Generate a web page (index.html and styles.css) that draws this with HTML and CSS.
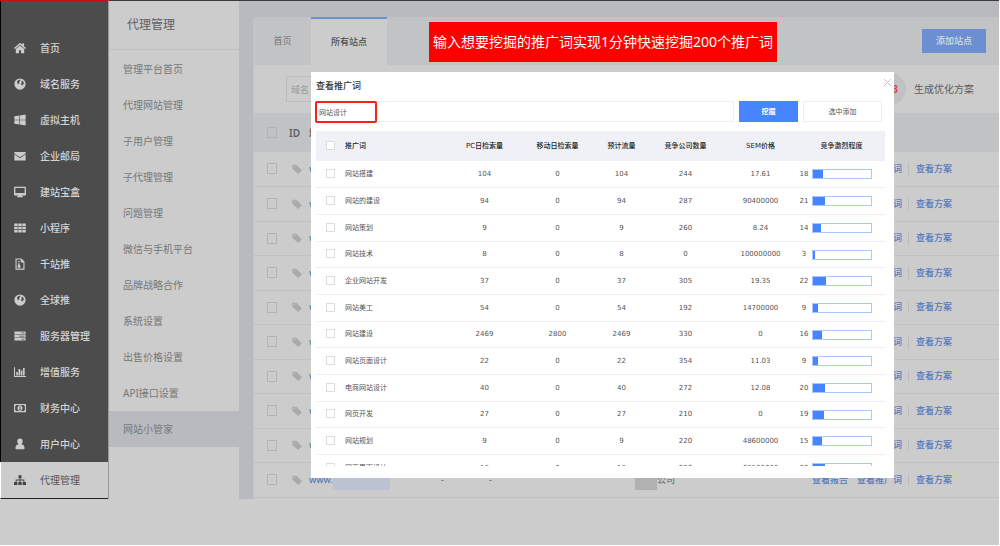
FILE: index.html
```html
<!DOCTYPE html>
<html lang="zh-CN">
<head>
<meta charset="utf-8">
<title>代理管理</title>
<link rel="stylesheet" href="styles.css">
</head>
<body>
<svg class="sprite" aria-hidden="true">
  <symbol id="i-home" viewBox="0 0 16 16"><path d="M8 1 0 8l1.200 1.400L8 3.600l6.800 5.800L16 8l-2.600-2.300V1.800h-2.200v2z"/><path d="M8 4.600 2.400 9.400V15h4.200v-4h2.800v4h4.200V9.400z"/></symbol>
  <symbol id="i-globe" viewBox="0 0 16 16"><path fill-rule="evenodd" d="M8 .5a7.500 7.500 0 1 0 0 15 7.500 7.500 0 0 0 0-15zM6 2.500 8.500 2.300 8 4.300 6.500 5.300 7.500 7 6 8 4.500 7 4 4.500zM10.500 3.200 12.500 4.500 13 7.500 11 10 9.500 8.500 10 6z"/></symbol>
  <symbol id="i-win" viewBox="0 0 16 16"><path d="M.5 3 7.200 2.100V7.600H.5zM8 2 15.500.8v6.800H8zM.5 8.400h6.700v5.500L.5 13zM8 8.400h7.500v6.800L8 14z"/></symbol>
  <symbol id="i-mail" viewBox="0 0 16 16"><path d="M.5 2.500h15v2L8 9.800.5 4.500zM.5 5.700 8 11l7.500-5.300V14H.5z"/></symbol>
  <symbol id="i-desk" viewBox="0 0 16 16"><path fill-rule="evenodd" d="M1 1h14a1 1 0 0 1 1 1v9.500a1 1 0 0 1-1 1h-4.500l.5 1.300h1V15H4v-1.200h1l.5-1.300H1a1 1 0 0 1-1-1V2a1 1 0 0 1 1-1zM1.800 2.600v6.600h12.400V2.600z"/></symbol>
  <symbol id="i-grid" viewBox="0 0 16 16"><path d="M.3 2h4.600v3.400H.3zM5.700 2h4.600v3.400H5.700zM11.100 2h4.600v3.400h-4.600zM.3 6.300h4.600v3.400H.3zM5.700 6.300h4.600v3.400H5.700zM11.100 6.300h4.600v3.400h-4.600zM.3 10.600h4.600V14H.3zM5.700 10.600h4.600V14H5.700zM11.100 10.600h4.600V14h-4.600z"/></symbol>
  <symbol id="i-file" viewBox="0 0 16 16"><path fill-rule="evenodd" d="M2 .5h8L14 4.500v11H2zM3.500 2v12h9V6H9V2zM5.500 4h2v1.500h-2zM5.500 7h2v1.500l1.500 3.500-1 1H5.500l-1-1 1-3z"/></symbol>
  <symbol id="i-server" viewBox="0 0 16 16"><path fill-rule="evenodd" d="M.5 2h15v3.600H.5zM10 3.300v1h4v-1zM.5 6.200h15v3.600H.5zM7 7.500v1h7v-1zM.5 10.400h15V14H.5zM10 11.700v1h4v-1z"/></symbol>
  <symbol id="i-chart" viewBox="0 0 16 16"><path d="M0 1.500h1.400v11.800H16v1.400H0zM3 8h2.200v4.500H3zM6 4h2.200v8.500H6zM9 6h2.200v6.500H9zM12 2.500h2.200v10H12z"/></symbol>
  <symbol id="i-money" viewBox="0 0 16 16"><path fill-rule="evenodd" d="M0 2.500h16v11H0zM3 4 1.500 5.500v5L3 12h10l1.500-1.500v-5L13 4zM8 4.200c4.500 0 4.500 7.600 0 7.600s-4.500-7.600 0-7.600zM7 6v1h.5v2.500H7v1h2.200v-1h-.7V5.800z"/></symbol>
  <symbol id="i-user" viewBox="0 0 16 16"><path d="M8 .8c5 0 4 6.500 1.800 7.400C13 8.500 14 11 14 13.500c0 1-.6 1.500-1.500 1.500h-9C2.600 15 2 14.500 2 13.500 2 11 3 8.500 6.200 8.200 4 7.300 3 .8 8 .8z"/></symbol>
  <symbol id="i-tree" viewBox="0 0 16 16"><path d="M6 1.500h4v4H8.600v1.800h5.200v3.200H16v4h-4.500v-4h1.100V8.500h-4v2h1.600v4H5.800v-4h1.600v-2h-4v2h1.100v4H0v-4h2.200V7.300h5.200V5.500H6z"/></symbol>
  <symbol id="i-tag" viewBox="0 0 16 16"><path fill-rule="evenodd" d="M.5 1H7l9 9-6 6L.5 7.500zM3.500 2.800a1 1 0 1 0 0 2 1 1 0 0 0 0-2z"/></symbol>
</svg>
<div class="page">
  <div class="shell">
    <nav class="side">
      <ul class="side-list">
        <li><a href="#"><svg><use href="#i-home"/></svg>首页</a></li>
        <li><a href="#"><svg><use href="#i-globe"/></svg>域名服务</a></li>
        <li><a href="#"><svg><use href="#i-win"/></svg>虚拟主机</a></li>
        <li><a href="#"><svg><use href="#i-mail"/></svg>企业邮局</a></li>
        <li><a href="#"><svg><use href="#i-desk"/></svg>建站宝盒</a></li>
        <li><a href="#"><svg><use href="#i-grid"/></svg>小程序</a></li>
        <li><a href="#"><svg><use href="#i-file"/></svg>千站推</a></li>
        <li><a href="#"><svg><use href="#i-globe"/></svg>全球推</a></li>
        <li><a href="#"><svg><use href="#i-server"/></svg>服务器管理</a></li>
        <li><a href="#"><svg><use href="#i-chart"/></svg>增值服务</a></li>
        <li><a href="#"><svg><use href="#i-money"/></svg>财务中心</a></li>
        <li><a href="#"><svg><use href="#i-user"/></svg>用户中心</a></li>
        <li class="current"><a href="#"><svg><use href="#i-tree"/></svg>代理管理</a></li>
      </ul>
    </nav>
    <nav class="sub">
      <h2 class="sub-title">代理管理</h2>
      <ul class="sub-list">
        <li><a href="#">管理平台首页</a></li>
        <li><a href="#">代理网站管理</a></li>
        <li><a href="#">子用户管理</a></li>
        <li><a href="#">子代理管理</a></li>
        <li><a href="#">问题管理</a></li>
        <li><a href="#">微信与手机平台</a></li>
        <li><a href="#">品牌战略合作</a></li>
        <li><a href="#">系统设置</a></li>
        <li><a href="#">出售价格设置</a></li>
        <li><a href="#">API接口设置</a></li>
        <li class="current"><a href="#">网站小管家</a></li>
      </ul>
    </nav>
    <main class="main">
      <div class="panel">
        <div class="tabs">
          <button class="tab" type="button">首页</button>
          <button class="tab active" type="button">所有站点</button>
          <button class="add" type="button">添加站点</button>
        </div>
        <div class="filter">
          <input class="filter-input" type="text" placeholder="域名" aria-label="域名">
          <span class="step">3</span>
          <span class="step-text">生成优化方案</span>
        </div>
        <table class="sites">
          <thead>
            <tr><th class="c-check"><input type="checkbox" aria-label="全选站点"></th><th class="c-tag">ID</th><th class="c-name">域名</th><th class="c-a"></th><th class="c-b"></th><th></th><th class="c-ops"></th></tr>
          </thead>
          <tbody id="sites"></tbody>
        </table>
      </div>
    </main>
  </div>

  <p class="banner">输入想要挖掘的推广词实现1分钟快速挖掘200个推广词</p>

  <section class="modal" role="dialog" aria-label="查看推广词">
    <header class="modal-head">
      <h3>查看推广词</h3>
      <button class="close" type="button" aria-label="关闭"><svg viewBox="0 0 8 8"><path d="M0 0 8 8M8 0 0 8"/></svg></button>
    </header>
    <form class="search">
      <div class="search-field">
        <input class="search-input" type="text" value="网站设计" aria-label="推广词">
        <span class="mark"></span>
      </div>
      <button class="btn primary" type="button">挖掘</button>
      <button class="btn" type="button">选中添加</button>
    </form>
    <div class="scroll">
      <table class="words">
        <colgroup><col class="w-check"><col class="w-name"><col class="w-pc"><col class="w-mob"><col class="w-flow"><col class="w-comp"><col class="w-sem"><col class="w-rate"></colgroup>
        <thead>
          <tr><th><input type="checkbox" aria-label="全选"></th><th class="name">推广词</th><th>PC日检索量</th><th>移动日检索量</th><th>预计流量</th><th>竞争公司数量</th><th>SEM价格</th><th>竞争激烈程度</th></tr>
        </thead>
        <tbody id="words"></tbody>
      </table>
    </div>
  </section>
</div>
<script src="app.js"></script>
</body>
</html>
```
FILE: styles.css
```css
* { box-sizing: border-box; }
body {
  margin: 0;
  background: #fff;
  font-family: "Noto Sans", "Noto Sans CJK SC", sans-serif;
  font-size: 10px;
  line-height: 14px;
  color: #666;
}
ul { list-style: none; margin: 0; padding: 0; }
h2, h3, p { margin: 0; font-weight: 400; }
a { color: inherit; text-decoration: none; }
button, input { font: inherit; color: inherit; margin: 0; }
button { border: 0; padding: 0; cursor: pointer; }
table { border-collapse: collapse; table-layout: fixed; width: 100%; }
th, td { padding: 0; }
svg { fill: currentColor; }
.sprite { display: none; }

.page {
  position: relative;
  min-height: 100vh;
  background: #ccc;
  border: solid #fff;
  border-width: 0 1px 1px 0;
}
.shell { display: flex; border-top: 1px solid #3a3a3c; }

.side {
  flex: 0 0 109px;
  margin-top: -1px;
  border-top: 1px solid #d00d0d;
  border-right: 1px solid #999;
  background: #4c4c4c;
}
.side-list { padding-top: 29px; border-left: 1px solid #000; background: #4c4c4c; }
.side-list a {
  display: flex;
  align-items: center;
  gap: 14px;
  height: 36px;
  padding-left: 13px;
  color: #d4d4d4;
  font-weight: 500;
}
.side-list svg { flex: none; width: 12px; height: 12px; color: #ccc; }
.side-list .current {
  margin-left: -1px;
  border-left: 1px solid #fff;
  border-bottom: 1px solid #222;
  background: #ccc;
}
.side-list .current a { color: #555; font-weight: 400; }
.side-list .current svg { color: #444; }

.sub { flex: 0 0 130px; background: #ccc; }
.sub-title {
  height: 49px;
  padding: 17px 18px 0;
  border-bottom: 1px solid #c0c0c0;
  font-size: 12px;
  color: #606060;
}
.sub-list { padding-top: 1px; }
.sub-list a { display: flex; align-items: center; height: 36px; padding-left: 14px; color: #777; }
.sub-list .current { background: #b8babf; }

.main { flex: 1; min-width: 0; padding: 16px 0 0 14px; background: #b8babf; }
.panel { height: 100%; background: #ccc; border-left: 1px solid #c2c3c6; }
.tabs { display: flex; height: 48px; background: #c2c3c5; font-size: 9px; }
.tab { width: 57px; background: none; color: #707070; }
.tab.active {
  width: 76px;
  background: #ccc;
  border-top: 2px solid #6b8fd0;
  color: #4c4c4c;
  font-weight: 500;
}
.add {
  align-self: center;
  width: 64px;
  height: 24px;
  margin: 0 13px 0 auto;
  background: #6b8fd0;
  color: #ddd;
  font-weight: 500;
}
.filter { display: flex; align-items: center; height: 48px; padding: 0 25px 0 32px; }
.filter-input { width: 200px; height: 26px; padding: 0 4px; border: 1px solid #bbb; background: #ccc; font-size: 9px; }
.filter-input::placeholder { color: #999; }
.step {
  width: 32px;
  height: 32px;
  margin-left: auto;
  padding-right: 8px;
  border-radius: 50%;
  background: #c0c1c4;
  color: #d4484a;
  font-weight: 700;
  line-height: 32px;
  text-align: right;
}
.step-text { margin-left: 8px; color: #5c5c5c; }

.sites { font-size: 9px; line-height: 12px; text-align: left; }
.sites thead tr { height: 39px; background: #c1c2c4; }
.sites tbody tr { height: 34px; border-bottom: 1px solid #c1c1c1; }
.sites tbody tr:nth-child(even) { height: 35px; }
.sites th { font-size: 10px; font-weight: 600; color: #606060; }
.c-check { width: 35px; }
.c-tag { width: 20px; }
.c-name { width: 132px; }
.c-a { width: 48px; }
.c-b { width: 146px; }
.c-ops { width: 187px; }
.sites td:first-child, .sites th:first-child { padding-left: 13px; }
.sites td:nth-child(2) svg { display: block; width: 10px; height: 10px; margin-left: 3px; color: #aaa; }
.sites a { color: #5379bf; font-weight: 500; }
.site { display: flex; align-items: center; }
.shade { width: 57px; height: 20px; background: #bbc3d3; }
.company { display: flex; align-items: center; }
.company .shade { width: 22px; background: #b1b1b1; }
.ops { display: flex; gap: 9px; }
.ops a:last-child { margin-left: -3px; padding-left: 7px; border-left: 1px solid #bbb; }

input[type="checkbox"] {
  appearance: none;
  display: block;
  width: 10px;
  height: 11px;
  border: 1px solid #b4b4b4;
  background: transparent;
}

.banner {
  position: absolute;
  top: 22px;
  left: 429px;
  padding: 11px 4px;
  background: #f00;
  color: #fff;
  font-size: 14px;
  line-height: 18px;
  white-space: nowrap;
}

.modal {
  position: absolute;
  top: 72px;
  left: 311px;
  right: 105px;
  padding: 0 9px 12px 5px;
  background: #fff;
  font-family: "DejaVu Sans", "Noto Sans CJK SC", sans-serif;
  font-size: 7px;
  line-height: 10px;
  color: #555;
}
.modal-head { display: flex; justify-content: space-between; height: 29px; padding-top: 7px; }
.modal-head h3 { font-size: 9px; line-height: 14px; color: #333; font-weight: 500; }
.close { width: 7px; height: 7px; margin-right: -6px; background: none; }
.close svg { display: block; width: 7px; height: 7px; stroke: #bbb; stroke-width: 1; }
.search { display: flex; gap: 5px; padding-right: 3px; }
.search-field { position: relative; flex: 1; }
.search-input { display: block; width: 100%; height: 21px; padding: 0 2px; border: 1px solid #eee; }
.mark {
  position: absolute;
  top: 0;
  left: -1px;
  width: 62px;
  height: 22px;
  border: 2px solid #f5221b;
  border-radius: 2px;
  pointer-events: none;
}
.btn { width: 79px; height: 21px; border: 1px solid #eee; background: #fff; }
.btn.primary { width: 59px; border-color: #4685ff; background: #4685ff; color: #fff; font-weight: 700; }
.scroll { margin-top: 9px; max-height: 335px; overflow: hidden; }
.words { text-align: center; }
.words thead tr { height: 30px; background: #eff1f6; color: #222; }
.words th { font-weight: 500; }
.words tbody tr { height: 27px; border-bottom: 1px solid #eee; }
.words tbody tr:nth-child(3n + 1) { height: 26px; }
.words .name { text-align: left; }
.words input[type="checkbox"] { width: 9px; height: 9px; margin: 0 0 1px 10px; border-color: #ddd; background: #fff; }
.w-check { width: 29px; }
.w-name { width: 104px; }
.w-pc { width: 71px; }
.w-mob { width: 75px; }
.w-flow { width: 53px; }
.w-comp { width: 75px; }
.w-sem { width: 75px; }
.rate { display: flex; align-items: center; gap: 2px; }
.rate span { width: 12px; }
.bar { width: 60px; height: 10px; margin-top: 1px; border: 1px solid #a9c6ff; }
.bar i { display: block; height: 100%; background: #4685ff; }
```
FILE: app.js
```js
const words = [
  ["网站搭建", 104, 0, 104, 244, "17.61", 18],
  ["网站的建设", 94, 0, 94, 287, "90400000", 21],
  ["网站策划", 9, 0, 9, 260, "8.24", 14],
  ["网站技术", 8, 0, 8, 0, "100000000", 3],
  ["企业网站开发", 37, 0, 37, 305, "19.35", 22],
  ["网站美工", 54, 0, 54, 192, "14700000", 9],
  ["网站建设", 2469, 2800, 2469, 330, "0", 16],
  ["网站页面设计", 22, 0, 22, 354, "11.03", 9],
  ["电商网站设计", 40, 0, 40, 272, "12.08", 20],
  ["网页开发", 27, 0, 27, 210, "0", 19],
  ["网站规划", 9, 0, 9, 220, "48600000", 15],
  ["网页界面设计", 18, 0, 18, 296, "68100000", 20]
];
document.getElementById("words").innerHTML = words.map(([name, ...rest]) => {
  const rate = rest.pop();
  return `<tr><td><input type="checkbox" aria-label="${name}"></td><td class="name">${name}</td>` +
    rest.map(v => `<td>${v}</td>`).join("") +
    `<td><div class="rate"><span>${rate}</span><div class="bar"><i style="width:${rate}%"></i></div></div></td></tr>`;
}).join("");

let rows = "";
for (let n = 1; n <= 10; n++) {
  const last = n === 10;
  rows += `<tr><td><input type="checkbox" aria-label="站点 ${n}"></td><td><svg><use href="#i-tag"/></svg></td>
    <td><div class="site"><a href="#">www.</a>${last ? '<span class="shade"></span>' : ""}</div></td>
    <td>${last ? "-" : ""}</td><td>${last ? "-" : ""}</td>
    <td>${last ? '<div class="company"><span class="shade"></span>公司</div>' : ""}</td>
    <td><div class="ops"><a href="#">查看报告</a><a href="#">查看推广词</a><a href="#">查看方案</a></div></td></tr>`;
}
document.getElementById("sites").innerHTML = rows;
```
